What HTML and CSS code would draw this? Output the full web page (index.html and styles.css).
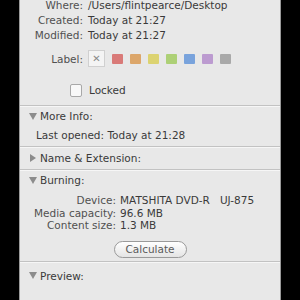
FILE: index.html
```html
<!DOCTYPE html>
<html lang="en">
<head>
    <meta charset="UTF-8">
    <title>Info</title>
    <link rel="stylesheet" href="styles.css">
</head>
<body>
    <div class="panel">
        <div class="section general">
            <div class="grid">
                <span class="key">Where:</span><span class="val">/Users/flintpearce/Desktop</span>
                <span class="key">Created:</span><span class="val">Today at 21:27</span>
                <span class="key">Modified:</span><span class="val">Today at 21:27</span>
            </div>
            <div class="label-row">
                <span class="key">Label:</span>
                <span class="none-box">&#x2715;</span>
                <span class="swatch red"></span>
                <span class="swatch orange"></span>
                <span class="swatch yellow"></span>
                <span class="swatch green"></span>
                <span class="swatch blue"></span>
                <span class="swatch purple"></span>
                <span class="swatch gray"></span>
            </div>
            <div class="locked">
                <span class="checkbox"></span>
                <span>Locked</span>
            </div>
        </div>

        <div class="section">
            <div class="header short"><span class="tri down"></span>More Info:</div>
            <div class="line">Last opened: Today at 21:28</div>
        </div>

        <div class="section">
            <div class="header"><span class="tri right"></span>Name &amp; Extension:</div>
        </div>

        <div class="section burning">
            <div class="header short"><span class="tri down"></span>Burning:</div>
            <div class="burn-grid">
                <span class="key">Device:</span><span class="val">MATSHITA DVD-R &nbsp; UJ-875</span>
                <span class="key">Media capacity:</span><span class="val">96.6 MB</span>
                <span class="key">Content size:</span><span class="val">1.3 MB</span>
            </div>
            <div class="actions">
                <button class="button">Calculate</button>
            </div>
        </div>

        <div class="section last">
            <div class="header"><span class="tri down"></span>Preview:</div>
        </div>
    </div>
</body>
</html>
```

FILE: styles.css
```css
body {
    margin: 0;
    background-color: #000;
    font-family: 'DejaVu Sans', sans-serif;
    font-size: 10.5px;
    color: #3a3a3a;
}
.panel {
    margin-left: 19px;
    width: 260px;
    height: 300px;
    background-color: #e8e8e8;
    border-left: 1px solid #9a9a9a;
    border-right: 1px solid #9a9a9a;
    overflow: hidden;
}
.section {
    border-bottom: 1px solid #c2c2c2;
    box-shadow: 0 1px 0 #f6f6f6;
}
.section.last {
    border-bottom: none;
    box-shadow: none;
}
.section.last .header {
    padding-top: 3px;
}
.key {
    color: #505050;
    text-align: right;
}
.general {
    margin-top: -2px;
    height: 107px;
    overflow: hidden;
}
.grid {
    display: grid;
    grid-template-columns: 63px 1fr;
    column-gap: 5px;
    line-height: 15px;
}
.label-row {
    display: flex;
    align-items: center;
    margin-top: 7px;
    height: 17px;
}
.label-row .key {
    width: 63px;
    margin-right: 5px;
}
.none-box {
    width: 15px;
    height: 15px;
    border: 1px solid #d0d0d0;
    background-color: #f4f4f4;
    color: #8a8a8a;
    font-size: 10px;
    line-height: 15px;
    text-align: center;
    margin-right: 7px;
}
.swatch {
    width: 11px;
    height: 10px;
    margin-right: 7px;
    border-radius: 1px;
}
.red { background-color: #d97a78; }
.orange { background-color: #dca66a; }
.yellow { background-color: #dcd371; }
.green { background-color: #add076; }
.blue { background-color: #79a3dc; }
.purple { background-color: #bc9bd0; }
.gray { background-color: #a9a9a9; }
.locked {
    display: flex;
    align-items: center;
    margin-top: 16px;
    margin-left: 50px;
    line-height: 14px;
}
.checkbox {
    width: 10px;
    height: 11px;
    border: 1px solid #a8a8a8;
    border-radius: 2px;
    background-color: #f8f8f8;
    margin-right: 7px;
}
.header {
    display: flex;
    align-items: center;
    padding-left: 9px;
    height: 22px;
}
.header.short {
    height: 20px;
}
.tri {
    width: 0;
    height: 0;
    margin-right: 3px;
}
.tri.down {
    border-left: 4px solid transparent;
    border-right: 4px solid transparent;
    border-top: 7px solid #8c8c8c;
}
.tri.right {
    margin-left: 1px;
    margin-right: 4px;
    border-top: 4px solid transparent;
    border-bottom: 4px solid transparent;
    border-left: 6px solid #8c8c8c;
}
.line {
    padding-left: 16px;
    line-height: 15px;
    margin-top: 2px;
    padding-bottom: 3px;
}
.burn-grid {
    display: grid;
    grid-template-columns: 96px 1fr;
    column-gap: 4px;
    line-height: 12.5px;
    margin-top: 4px;
}
.actions {
    display: flex;
    justify-content: center;
    padding: 9px 0 3px;
}
.button {
    font-family: 'DejaVu Sans', sans-serif;
    font-size: 10.5px;
    color: #5a5a5a;
    width: 73px;
    height: 17px;
    padding: 0;
    border: 1px solid #9a9a9a;
    border-radius: 9px;
    background: linear-gradient(#ffffff, #e4e4e4);
}
```
